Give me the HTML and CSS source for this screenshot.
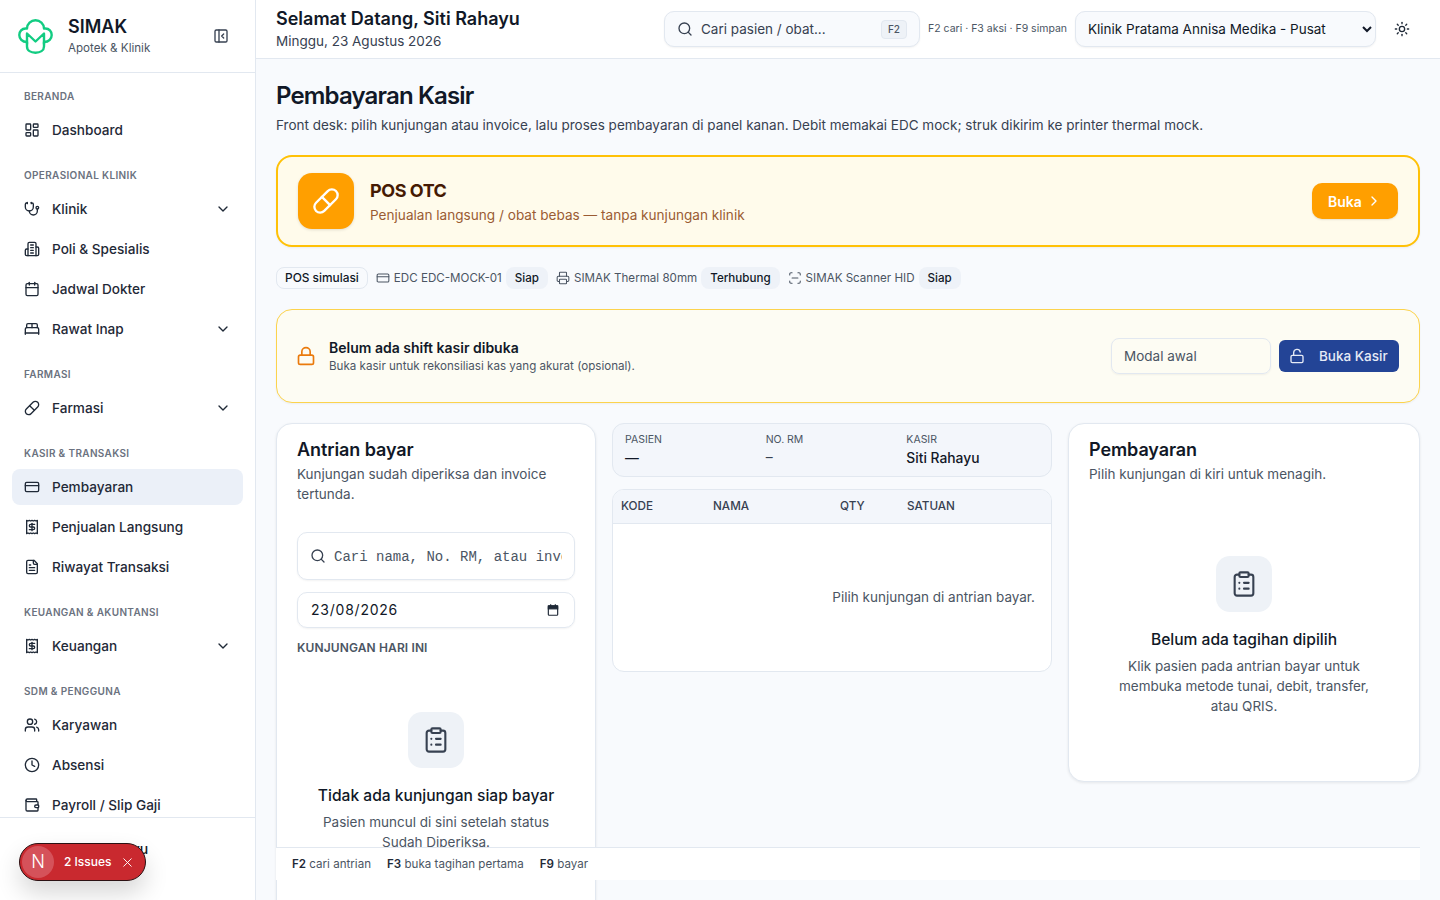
FILE: index.html
```html
<!DOCTYPE html>
<html lang="id">
<head>
    <meta charset="UTF-8">
    <meta name="viewport" content="width=device-width, initial-scale=1.0">
    <title>Pembayaran Kasir - SIMAK</title>
    <link rel="stylesheet" href="styles.css">
</head>
<body>
    <svg class="sprite" xmlns="http://www.w3.org/2000/svg">
        <symbol id="i-panel" viewBox="0 0 24 24"><rect x="3" y="3" width="18" height="18" rx="2"/><path d="M9 3v18"/><path d="m16 15-3-3 3-3"/></symbol>
        <symbol id="i-dashboard" viewBox="0 0 24 24"><rect x="3" y="3" width="7" height="9" rx="1"/><rect x="14" y="3" width="7" height="5" rx="1"/><rect x="14" y="12" width="7" height="9" rx="1"/><rect x="3" y="16" width="7" height="5" rx="1"/></symbol>
        <symbol id="i-stethoscope" viewBox="0 0 24 24"><path d="M11 2v2"/><path d="M5 2v2"/><path d="M5 3H4a2 2 0 0 0-2 2v4a6 6 0 0 0 12 0V5a2 2 0 0 0-2-2h-1"/><path d="M8 15a6 6 0 0 0 12 0v-3"/><circle cx="20" cy="10" r="2"/></symbol>
        <symbol id="i-building" viewBox="0 0 24 24"><path d="M6 22V4a2 2 0 0 1 2-2h8a2 2 0 0 1 2 2v18Z"/><path d="M6 12H4a2 2 0 0 0-2 2v6a2 2 0 0 0 2 2h2"/><path d="M18 9h2a2 2 0 0 1 2 2v9a2 2 0 0 1-2 2h-2"/><path d="M10 6h4"/><path d="M10 10h4"/><path d="M10 14h4"/><path d="M10 18h4"/></symbol>
        <symbol id="i-calendar" viewBox="0 0 24 24"><path d="M8 2v4"/><path d="M16 2v4"/><rect x="3" y="4" width="18" height="18" rx="2"/><path d="M3 10h18"/></symbol>
        <symbol id="i-bed" viewBox="0 0 24 24"><path d="M2 20v-8a2 2 0 0 1 2-2h16a2 2 0 0 1 2 2v8"/><path d="M4 10V6a2 2 0 0 1 2-2h12a2 2 0 0 1 2 2v4"/><path d="M12 4v6"/><path d="M2 18h20"/></symbol>
        <symbol id="i-pill" viewBox="0 0 24 24"><path d="m10.5 20.5 10-10a4.95 4.95 0 1 0-7-7l-10 10a4.95 4.95 0 1 0 7 7Z"/><path d="m8.5 8.5 7 7"/></symbol>
        <symbol id="i-card" viewBox="0 0 24 24"><rect x="2" y="5" width="20" height="14" rx="2"/><path d="M2 10h20"/></symbol>
        <symbol id="i-receipt" viewBox="0 0 24 24"><path d="M4 2v20l2-1 2 1 2-1 2 1 2-1 2 1 2-1 2 1V2l-2 1-2-1-2 1-2-1-2 1-2-1-2 1Z"/><path d="M16 8h-6a2 2 0 1 0 0 4h4a2 2 0 1 1 0 4H8"/><path d="M12 17.5v-11"/></symbol>
        <symbol id="i-file" viewBox="0 0 24 24"><path d="M15 2H6a2 2 0 0 0-2 2v16a2 2 0 0 0 2 2h12a2 2 0 0 0 2-2V7Z"/><path d="M14 2v4a2 2 0 0 0 2 2h4"/><path d="M10 9H8"/><path d="M16 13H8"/><path d="M16 17H8"/></symbol>
        <symbol id="i-users" viewBox="0 0 24 24"><path d="M16 21v-2a4 4 0 0 0-4-4H6a4 4 0 0 0-4 4v2"/><circle cx="9" cy="7" r="4"/><path d="M22 21v-2a4 4 0 0 0-3-3.87"/><path d="M16 3.13a4 4 0 0 1 0 7.75"/></symbol>
        <symbol id="i-clock" viewBox="0 0 24 24"><circle cx="12" cy="12" r="10"/><path d="M12 6v6l4 2"/></symbol>
        <symbol id="i-wallet" viewBox="0 0 24 24"><path d="M19 7V4a1 1 0 0 0-1-1H5a2 2 0 0 0 0 4h15a1 1 0 0 1 1 1v4h-3a2 2 0 0 0 0 4h3a1 1 0 0 0 1-1v-2a1 1 0 0 0-1-1"/><path d="M3 5v14a2 2 0 0 0 2 2h15a1 1 0 0 0 1-1v-4"/></symbol>
        <symbol id="i-chevron-down" viewBox="0 0 24 24"><path d="m6 9 6 6 6-6"/></symbol>
        <symbol id="i-chevron-right" viewBox="0 0 24 24"><path d="m9 18 6-6-6-6"/></symbol>
        <symbol id="i-search" viewBox="0 0 24 24"><circle cx="11" cy="11" r="8"/><path d="m21 21-4.3-4.3"/></symbol>
        <symbol id="i-sun" viewBox="0 0 24 24"><circle cx="12" cy="12" r="4"/><path d="M12 2v2"/><path d="M12 20v2"/><path d="m4.93 4.93 1.41 1.41"/><path d="m17.66 17.66 1.41 1.41"/><path d="M2 12h2"/><path d="M20 12h2"/><path d="m6.34 17.66-1.41 1.41"/><path d="m19.07 4.93-1.41 1.41"/></symbol>
        <symbol id="i-printer" viewBox="0 0 24 24"><path d="M6 18H4a2 2 0 0 1-2-2v-5a2 2 0 0 1 2-2h16a2 2 0 0 1 2 2v5a2 2 0 0 1-2 2h-2"/><path d="M6 9V3a1 1 0 0 1 1-1h10a1 1 0 0 1 1 1v6"/><rect x="6" y="14" width="12" height="8" rx="1"/></symbol>
        <symbol id="i-scan" viewBox="0 0 24 24"><path d="M3 7V5a2 2 0 0 1 2-2h2"/><path d="M17 3h2a2 2 0 0 1 2 2v2"/><path d="M21 17v2a2 2 0 0 1-2 2h-2"/><path d="M7 21H5a2 2 0 0 1-2-2v-2"/><path d="M7 12h10"/></symbol>
        <symbol id="i-lock" viewBox="0 0 24 24"><rect x="3" y="11" width="18" height="11" rx="2"/><path d="M7 11V7a5 5 0 0 1 10 0v4"/></symbol>
        <symbol id="i-lock-open" viewBox="0 0 24 24"><rect x="3" y="11" width="18" height="11" rx="2"/><path d="M7 11V7a5 5 0 0 1 9.9-1"/></symbol>
        <symbol id="i-clipboard" viewBox="0 0 24 24"><rect x="8" y="2" width="8" height="4" rx="1"/><path d="M16 4h2a2 2 0 0 1 2 2v14a2 2 0 0 1-2 2H6a2 2 0 0 1-2-2V6a2 2 0 0 1 2-2h2"/><path d="M12 11h4"/><path d="M12 16h4"/><path d="M8 11h.01"/><path d="M8 16h.01"/></symbol>
        <symbol id="i-x" viewBox="0 0 24 24"><path d="M18 6 6 18"/><path d="m6 6 12 12"/></symbol>
    </svg>

    <div class="app">
        <aside class="sidebar">
            <div class="brand">
                <svg class="brand-logo" viewBox="0 0 35 35">
                    <path d="M9 9.5C9 4.5 13 1.3 17.5 1.3S26 4.5 26 9.5h1.500C31 9.500 33.700 12.500 33.700 16S31 23 26 23v4.500c0 4-3.800 6.200-8.500 6.200S9 31.500 9 27.500V23C4 23 1.300 19.500 1.300 16S4 9.500 7.500 9.500Z"/>
                    <path d="M9 25V14.500l8.500 8 8.500-8V25"/>
                </svg>
                <div class="brand-text">
                    <div class="brand-name">SIMAK</div>
                    <div class="brand-sub">Apotek &amp; Klinik</div>
                </div>
                <svg class="icon brand-toggle"><use href="#i-panel"/></svg>
            </div>

            <nav class="nav">
                <div class="nav-section">
                    <div class="nav-label">Beranda</div>
                    <a class="nav-item"><svg class="icon"><use href="#i-dashboard"/></svg>Dashboard</a>
                </div>
                <div class="nav-section">
                    <div class="nav-label">Operasional Klinik</div>
                    <a class="nav-item"><svg class="icon"><use href="#i-stethoscope"/></svg>Klinik<svg class="icon nav-caret"><use href="#i-chevron-down"/></svg></a>
                    <a class="nav-item"><svg class="icon"><use href="#i-building"/></svg>Poli &amp; Spesialis</a>
                    <a class="nav-item"><svg class="icon"><use href="#i-calendar"/></svg>Jadwal Dokter</a>
                    <a class="nav-item"><svg class="icon"><use href="#i-bed"/></svg>Rawat Inap<svg class="icon nav-caret"><use href="#i-chevron-down"/></svg></a>
                </div>
                <div class="nav-section">
                    <div class="nav-label">Farmasi</div>
                    <a class="nav-item"><svg class="icon"><use href="#i-pill"/></svg>Farmasi<svg class="icon nav-caret"><use href="#i-chevron-down"/></svg></a>
                </div>
                <div class="nav-section">
                    <div class="nav-label">Kasir &amp; Transaksi</div>
                    <a class="nav-item active"><svg class="icon"><use href="#i-card"/></svg>Pembayaran</a>
                    <a class="nav-item"><svg class="icon"><use href="#i-receipt"/></svg>Penjualan Langsung</a>
                    <a class="nav-item"><svg class="icon"><use href="#i-file"/></svg>Riwayat Transaksi</a>
                </div>
                <div class="nav-section">
                    <div class="nav-label">Keuangan &amp; Akuntansi</div>
                    <a class="nav-item"><svg class="icon"><use href="#i-receipt"/></svg>Keuangan<svg class="icon nav-caret"><use href="#i-chevron-down"/></svg></a>
                </div>
                <div class="nav-section">
                    <div class="nav-label">SDM &amp; Pengguna</div>
                    <a class="nav-item"><svg class="icon"><use href="#i-users"/></svg>Karyawan</a>
                    <a class="nav-item"><svg class="icon"><use href="#i-clock"/></svg>Absensi</a>
                    <a class="nav-item"><svg class="icon"><use href="#i-wallet"/></svg>Payroll / Slip Gaji</a>
                </div>
            </nav>

            <div class="sidebar-foot">Siti Rahayu</div>

            <div class="dev-badge">
                <span class="dev-logo">N</span>
                <span class="dev-count">2 Issues</span>
                <svg class="icon dev-close"><use href="#i-x"/></svg>
            </div>
        </aside>

        <div class="main">
            <header class="topbar">
                <div class="greeting">
                    <div class="greeting-title">Selamat Datang, Siti Rahayu</div>
                    <div class="greeting-date">Minggu, 23 Agustus 2026</div>
                </div>
                <div class="top-search">
                    <svg class="icon"><use href="#i-search"/></svg>
                    <span class="top-search-text">Cari pasien / obat...</span>
                    <kbd class="kbd">F2</kbd>
                </div>
                <span class="top-hint">F2 cari · F3 aksi · F9 simpan</span>
                <select class="clinic-select">
                    <option>Klinik Pratama Annisa Medika - Pusat</option>
                </select>
                <svg class="icon theme-toggle"><use href="#i-sun"/></svg>
            </header>

            <main class="content">
                <h1 class="page-title">Pembayaran Kasir</h1>
                <p class="page-desc">Front desk: pilih kunjungan atau invoice, lalu proses pembayaran di panel kanan. Debit memakai EDC mock; struk dikirim ke printer thermal mock.</p>

                <section class="pos-card">
                    <div class="pos-icon"><svg class="icon"><use href="#i-pill"/></svg></div>
                    <div class="pos-text">
                        <div class="pos-title">POS OTC</div>
                        <div class="pos-sub">Penjualan langsung / obat bebas — tanpa kunjungan klinik</div>
                    </div>
                    <button class="pos-btn">Buka<svg class="icon"><use href="#i-chevron-right"/></svg></button>
                </section>

                <div class="status-row">
                    <span class="status-mode">POS simulasi</span>
                    <span class="status-item"><svg class="icon"><use href="#i-card"/></svg>EDC EDC-MOCK-01</span>
                    <span class="status-tag">Siap</span>
                    <span class="status-item"><svg class="icon"><use href="#i-printer"/></svg>SIMAK Thermal 80mm</span>
                    <span class="status-tag">Terhubung</span>
                    <span class="status-item"><svg class="icon"><use href="#i-scan"/></svg>SIMAK Scanner HID</span>
                    <span class="status-tag">Siap</span>
                </div>

                <section class="shift-card">
                    <svg class="icon shift-icon"><use href="#i-lock"/></svg>
                    <div class="shift-text">
                        <div class="shift-title">Belum ada shift kasir dibuka</div>
                        <div class="shift-sub">Buka kasir untuk rekonsiliasi kas yang akurat (opsional).</div>
                    </div>
                    <input class="shift-input" type="text" placeholder="Modal awal">
                    <button class="shift-btn"><svg class="icon"><use href="#i-lock-open"/></svg>Buka Kasir</button>
                </section>

                <div class="columns">
                    <section class="card card-queue">
                        <h2 class="card-title">Antrian bayar</h2>
                        <p class="card-desc">Kunjungan sudah diperiksa dan invoice tertunda.</p>
                        <div class="queue-search">
                            <svg class="icon"><use href="#i-search"/></svg>
                            <input type="text" placeholder="Cari nama, No. RM, atau invoice">
                        </div>
                        <div class="queue-date">
                            <span>23/08/2026</span>
                            <svg class="date-icon" viewBox="0 0 24 24"><path d="M8 2v3M16 2v3"/><rect x="4" y="5" width="16" height="16" rx="1.500"/><rect class="date-head" x="4" y="5" width="16" height="5"/></svg>
                        </div>
                        <div class="queue-label">Kunjungan hari ini</div>
                        <div class="empty empty-queue">
                            <div class="empty-icon"><svg class="icon"><use href="#i-clipboard"/></svg></div>
                            <div class="empty-title">Tidak ada kunjungan siap bayar</div>
                            <p class="empty-desc">Pasien muncul di sini setelah status Sudah Diperiksa.</p>
                        </div>
                    </section>

                    <div class="middle">
                        <div class="patient">
                            <div>
                                <div class="patient-label">Pasien</div>
                                <div class="patient-value">—</div>
                            </div>
                            <div>
                                <div class="patient-label">No. RM</div>
                                <div class="patient-value patient-rm">–</div>
                            </div>
                            <div>
                                <div class="patient-label">Kasir</div>
                                <div class="patient-value">Siti Rahayu</div>
                            </div>
                        </div>
                        <div class="table-wrap">
                            <table class="bill-table">
                                <thead>
                                    <tr>
                                        <th class="col-code">Kode</th>
                                        <th class="col-name">Nama</th>
                                        <th class="col-qty">Qty</th>
                                        <th>Satuan</th>
                                    </tr>
                                </thead>
                                <tbody>
                                    <tr><td colspan="4">Pilih kunjungan di antrian bayar.</td></tr>
                                </tbody>
                            </table>
                        </div>
                    </div>

                    <section class="card card-pay">
                        <h2 class="card-title">Pembayaran</h2>
                        <p class="card-desc">Pilih kunjungan di kiri untuk menagih.</p>
                        <div class="empty empty-pay">
                            <div class="empty-icon"><svg class="icon"><use href="#i-clipboard"/></svg></div>
                            <div class="empty-title">Belum ada tagihan dipilih</div>
                            <p class="empty-desc">Klik pasien pada antrian bayar untuk membuka metode tunai, debit, transfer, atau QRIS.</p>
                        </div>
                    </section>
                </div>

                <div class="shortcuts">
                    <span><b>F2</b> cari antrian</span>
                    <span><b>F3</b> buka tagihan pertama</span>
                    <span><b>F9</b> bayar</span>
                </div>
            </main>
        </div>
    </div>
</body>
</html>
```

FILE: styles.css
```css
/* global */
* {
    box-sizing: border-box;
}

body {
    margin: 0;
    font-family: 'Inter', 'Liberation Sans', sans-serif;
    font-size: 13.5px;
    line-height: 20px;
    color: #111827;
    background-color: #f8fafd;
}

h1, h2, p {
    margin: 0;
}

.sprite {
    display: none;
}

.icon {
    width: 16px;
    height: 16px;
    flex: none;
    fill: none;
    stroke: currentColor;
    stroke-width: 2;
    stroke-linecap: round;
    stroke-linejoin: round;
}

.app {
    display: flex;
    height: 100vh;
    overflow: hidden;
}

/* sidebar */
.sidebar {
    position: relative;
    width: 256px;
    flex: none;
    display: flex;
    flex-direction: column;
    background: #fff;
    border-right: 1px solid #e2e8f0;
}

.brand {
    height: 73px;
    flex: none;
    display: flex;
    align-items: center;
    padding: 0 18px;
    border-bottom: 1px solid #e2e8f0;
}

.brand-logo {
    width: 35px;
    height: 35px;
    flex: none;
    fill: none;
    stroke: #12cc82;
    stroke-width: 2.4;
    stroke-linejoin: round;
    stroke-linecap: round;
}

.brand-text {
    margin: -2px 0 0 15px;
    flex: 1;
}

.brand-name {
    font-size: 18px;
    line-height: 24px;
    font-weight: 600;
    color: #111827;
}

.brand-sub {
    font-size: 11.6px;
    line-height: 16px;
    margin-top: 1px;
    color: #4b5563;
}

.brand-toggle {
    color: #374151;
    margin-right: 8px;
}

.nav {
    flex: 1;
    min-height: 0;
    overflow: hidden;
    padding: 15px 12px 0;
}

.nav-section {
    display: flex;
    flex-direction: column;
    gap: 4px;
    margin-bottom: 19px;
}

.nav-label {
    font-size: 10px;
    line-height: 16px;
    font-weight: 600;
    letter-spacing: 0.035em;
    text-transform: uppercase;
    color: #6b7280;
    padding-left: 12px;
    margin-bottom: 4px;
}

.nav-item {
    height: 36px;
    flex: none;
    display: flex;
    align-items: center;
    gap: 12px;
    padding: 0 12px;
    border-radius: 8px;
    font-size: 13.6px;
    font-weight: 500;
    color: #1f2937;
}

.nav-item .nav-caret {
    margin-left: auto;
}

.nav-item.active {
    background-color: #ebf0f8;
}

.sidebar-foot {
    height: 83px;
    flex: none;
    border-top: 1px solid #e2e8f0;
    padding: 21px 0 0 74px;
    font-size: 14px;
    font-weight: 500;
    color: #111827;
}

/* dev badge */
.dev-badge {
    position: absolute;
    left: 19px;
    bottom: 19px;
    width: 127px;
    height: 38px;
    display: flex;
    align-items: center;
    padding-left: 2px;
    border-radius: 19px;
    background: #c9292f;
    border: 1px solid #2b1113;
    color: #fff;
    box-shadow: 0 12px 24px rgba(0, 0, 0, 0.16);
}

.dev-logo {
    width: 32px;
    height: 32px;
    flex: none;
    display: flex;
    align-items: center;
    justify-content: center;
    border-radius: 50%;
    background: #d5525a;
    font-size: 18px;
    font-weight: 300;
}

.dev-count {
    margin-left: 10px;
    font-size: 12px;
    font-weight: 500;
}

.dev-close {
    width: 15px;
    height: 15px;
    margin-left: 8px;
    stroke-width: 1.500;
}

/* top bar */
.main {
    flex: 1;
    min-width: 0;
    display: flex;
    flex-direction: column;
}

.topbar {
    height: 59px;
    flex: none;
    display: flex;
    align-items: center;
    padding: 0 20px;
    background: #fff;
    border-bottom: 1px solid #e2e8f0;
}

.greeting {
    width: 388px;
    flex: none;
}

.greeting-title {
    font-size: 18px;
    line-height: 24px;
    font-weight: 600;
}

.greeting-date {
    color: #374151;
}

.top-search {
    width: 256px;
    height: 36px;
    flex: none;
    display: flex;
    align-items: center;
    gap: 8px;
    padding: 0 12px;
    border: 1px solid #e2e8f0;
    border-radius: 10px;
    background: #f8fafd;
    color: #374151;
    box-shadow: 0 1px 2px rgba(0, 0, 0, 0.05);
}

.top-search-text {
    flex: 1;
    overflow: hidden;
    white-space: nowrap;
}

.kbd {
    width: 26px;
    height: 19px;
    display: flex;
    align-items: center;
    justify-content: center;
    border: 1px solid #e2e8f0;
    border-radius: 4px;
    background: #eef2f7;
    font-family: inherit;
    font-size: 10px;
    font-weight: 500;
    color: #4b5563;
}

.top-hint {
    width: 155px;
    flex: none;
    padding-left: 8px;
    font-size: 10.5px;
    white-space: nowrap;
    color: #4b5563;
}

.clinic-select {
    width: 301px;
    height: 36px;
    flex: none;
    padding: 0 8px;
    border: 1px solid #e2e8f0;
    border-radius: 10px;
    background-color: #f8fafd;
    font-family: inherit;
    font-size: 13.5px;
    color: #111827;
    box-shadow: 0 1px 2px rgba(0, 0, 0, 0.05);
}

.theme-toggle {
    margin-left: 18px;
    color: #1f2937;
}

/* content */
.content {
    position: relative;
    flex: 1;
    min-height: 0;
    overflow: hidden;
    padding: 21px 20px 20px;
}

.page-title {
    font-size: 24px;
    line-height: 32px;
    font-weight: 600;
    letter-spacing: -0.035em;
}

.page-desc {
    margin-top: 3px;
    color: #374151;
}

/* POS banner */
.pos-card {
    height: 92px;
    margin-top: 20px;
    display: flex;
    align-items: center;
    padding: 0 20px;
    border: 2px solid #ffc107;
    border-radius: 16px;
    background: #fffbeb;
    box-shadow: 0 1px 2px rgba(0, 0, 0, 0.05);
}

.pos-icon {
    width: 56px;
    height: 56px;
    flex: none;
    display: flex;
    align-items: center;
    justify-content: center;
    border-radius: 14px;
    background: #ff9f00;
    color: #fff;
    box-shadow: 0 1px 3px rgba(0, 0, 0, 0.12);
}

.pos-icon .icon {
    width: 28px;
    height: 28px;
}

.pos-text {
    flex: 1;
    margin-left: 16px;
}

.pos-title {
    font-size: 18px;
    line-height: 28px;
    font-weight: 700;
    letter-spacing: -0.025em;
    color: #451a03;
}

.pos-sub {
    font-size: 13.6px;
    color: #9a5b33;
}

.pos-btn {
    width: 86px;
    height: 36px;
    display: flex;
    align-items: center;
    gap: 4px;
    padding: 0 16px;
    border: none;
    border-radius: 10px;
    background: #ff9f00;
    color: #fff;
    font-family: inherit;
    font-size: 14px;
    font-weight: 600;
    box-shadow: 0 1px 2px rgba(0, 0, 0, 0.1);
}

/* device status */
.status-row {
    height: 22px;
    margin-top: 20px;
    display: flex;
    align-items: center;
    gap: 4px;
    font-size: 11.6px;
    white-space: nowrap;
}

.status-mode {
    height: 22px;
    display: flex;
    align-items: center;
    padding: 0 8px;
    margin-right: 4px;
    border: 1px solid #e2e8f0;
    border-radius: 8px;
    font-size: 11.9px;
    font-weight: 500;
    color: #111827;
}

.status-item {
    display: flex;
    align-items: center;
    gap: 4px;
    color: #4b5563;
}

.status-item .icon {
    width: 14px;
    height: 14px;
    stroke-width: 1.800;
}

.status-tag {
    height: 22px;
    display: flex;
    align-items: center;
    padding: 0 9px;
    margin-right: 4px;
    border-radius: 8px;
    background: #eef2f8;
    font-weight: 500;
    color: #111827;
}

/* shift */
.shift-card {
    height: 94px;
    margin-top: 20px;
    display: flex;
    align-items: center;
    padding: 0 20px 0 19px;
    border: 1px solid #fcd34d;
    border-radius: 16px;
    background: #fdfcf3;
    box-shadow: 0 1px 2px rgba(0, 0, 0, 0.05);
}

.shift-icon {
    width: 20px;
    height: 20px;
    color: #ea7a0c;
}

.shift-text {
    flex: 1;
    margin-left: 13px;
    padding-top: 2px;
}

.shift-title {
    font-size: 14px;
    font-weight: 600;
    line-height: 18px;
}

.shift-sub {
    font-size: 11.6px;
    line-height: 18px;
    color: #4b5563;
}

.shift-input {
    width: 160px;
    height: 36px;
    padding: 0 12px;
    border: 1px solid #e2e8f0;
    border-radius: 8px;
    background: transparent;
    font-family: inherit;
    font-size: 13.5px;
    box-shadow: 0 1px 2px rgba(0, 0, 0, 0.05);
}

.shift-input::placeholder {
    color: #4b5563;
    opacity: 1;
}

.shift-btn {
    width: 120px;
    height: 32px;
    margin-left: 8px;
    display: flex;
    align-items: center;
    gap: 14px;
    padding: 0 10px;
    border: none;
    border-radius: 6px;
    background: #234496;
    color: #e6ebf6;
    font-family: inherit;
    font-size: 13.5px;
    font-weight: 500;
    white-space: nowrap;
}

/* columns */
.columns {
    margin-top: 20px;
    display: grid;
    grid-template-columns: 320px 440px 352px;
    gap: 16px;
    align-items: start;
    justify-content: space-between;
}

.card {
    padding: 14px 20px 20px;
    background: #fff;
    border: 1px solid #e2e8f0;
    border-radius: 16px;
    box-shadow: 0 1px 3px rgba(0, 0, 0, 0.08);
}

.card-title {
    font-size: 18px;
    line-height: 24px;
    font-weight: 600;
    letter-spacing: -0.005em;
}

.card-desc {
    margin-top: 2px;
    color: #4b5563;
}

.card-queue {
    min-height: 600px;
}

.queue-search {
    height: 48px;
    margin-top: 28px;
    display: flex;
    align-items: center;
    gap: 8px;
    padding: 0 12px;
    border: 1px solid #e2e8f0;
    border-radius: 10px;
    color: #374151;
    box-shadow: 0 1px 2px rgba(0, 0, 0, 0.05);
}

.queue-search input {
    flex: 1;
    min-width: 0;
    border: none;
    outline: none;
    padding: 2px 0 0;
    font-family: 'Liberation Mono', monospace;
    font-size: 14px;
}

.queue-search input::placeholder {
    color: #4b5563;
    opacity: 1;
}

.queue-date {
    height: 36px;
    margin-top: 12px;
    display: flex;
    align-items: center;
    justify-content: space-between;
    padding: 0 14px 0 13px;
    border: 1px solid #e2e8f0;
    border-radius: 10px;
    font-size: 14px;
    letter-spacing: 0.055em;
    box-shadow: 0 1px 2px rgba(0, 0, 0, 0.05);
}

.date-icon {
    width: 14px;
    height: 14px;
    fill: none;
    stroke: #1f2937;
    stroke-width: 2;
}

.date-head {
    fill: #1f2937;
}

.queue-label {
    margin-top: 12px;
    font-size: 12px;
    line-height: 16px;
    font-weight: 600;
    letter-spacing: 0.01em;
    text-transform: uppercase;
    color: #4b5563;
}

/* empty states */
.empty {
    display: flex;
    flex-direction: column;
    align-items: center;
    text-align: center;
}

.empty-queue {
    margin-top: 56px;
}

.empty-pay {
    margin-top: 72px;
    padding: 0 20px 45px;
}

.empty-icon {
    width: 56px;
    height: 56px;
    display: flex;
    align-items: center;
    justify-content: center;
    border-radius: 14px;
    background: #eef2f7;
    color: #374151;
}

.empty-icon .icon {
    width: 28px;
    height: 28px;
    stroke-width: 1.800;
}

.empty-title {
    margin-top: 16px;
    font-size: 15.6px;
    line-height: 24px;
    font-weight: 500;
}

.empty-desc {
    max-width: 260px;
    margin-top: 4px;
    color: #4b5563;
}

/* middle column */
.patient {
    height: 54px;
    display: grid;
    grid-template-columns: repeat(3, 1fr);
    gap: 8px;
    padding: 8px 12px;
    border: 1px solid #e2e8f0;
    border-radius: 12px;
    background: #f3f6fb;
}

.patient-label {
    font-size: 10.500px;
    line-height: 15px;
    text-transform: uppercase;
    color: #4b5563;
}

.patient-value {
    margin-top: 1px;
    font-size: 13.8px;
    font-weight: 500;
}

.patient-rm {
    font-weight: 400;
    color: #374151;
    margin-top: 0;
}

.table-wrap {
    margin-top: 12px;
    overflow: hidden;
    background: #fff;
    border: 1px solid #e2e8f0;
    border-radius: 12px;
}

.bill-table {
    width: 100%;
    border-collapse: collapse;
    table-layout: fixed;
}

.bill-table th {
    height: 33px;
    padding: 0 8px;
    text-align: left;
    font-size: 11.7px;
    font-weight: 500;
    text-transform: uppercase;
    color: #374151;
    background: #f3f6fb;
    border-bottom: 1px solid #e2e8f0;
}

.col-code {
    width: 92px;
}

.col-name {
    width: 127px;
}

.col-qty {
    width: 67px;
}

.bill-table td {
    height: 148px;
    padding: 0 16px;
    text-align: right;
    color: #4b5563;
}

/* shortcut bar */
.shortcuts {
    position: absolute;
    left: 20px;
    right: 20px;
    bottom: 20px;
    height: 33px;
    display: flex;
    align-items: center;
    gap: 16px;
    padding: 0 16px;
    background: #fff;
    border-top: 1px solid #e2e8f0;
    font-size: 11.6px;
    color: #4b5563;
}

.shortcuts b {
    font-weight: 600;
    color: #1f2937;
}
```
